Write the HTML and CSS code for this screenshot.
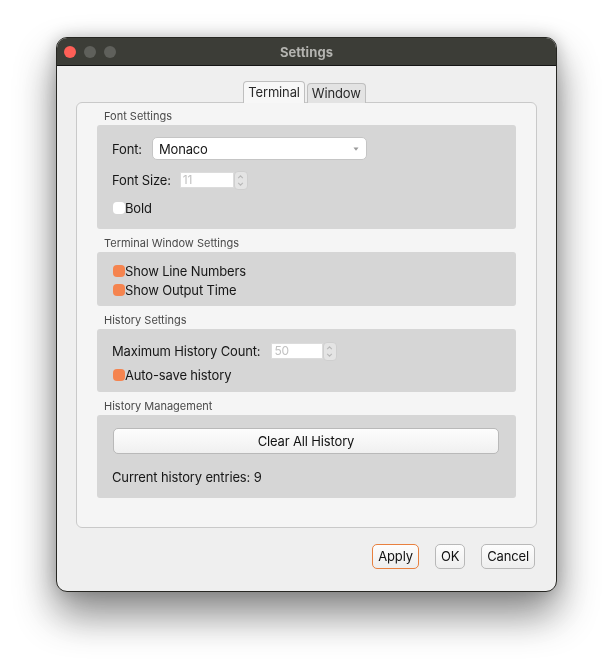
FILE: index.html
```html
<!DOCTYPE html>
<html>
<head>
<meta charset="utf-8">
<title>Settings</title>
<link rel="stylesheet" href="styles.css">
</head>
<body>
<div class="shadow-wrap">
<div class="window">
  <div class="titlebar">
    <div class="lights">
      <span class="light red"></span>
      <span class="light grey"></span>
      <span class="light grey"></span>
    </div>
    <div class="title">Settings</div>
    <div></div>
  </div>
  <div class="content">
    <div class="tabs">
      <div class="tab active">Terminal</div>
      <div class="tab">Window</div>
    </div>
    <div class="pane">
      <section class="section">
        <div class="group-title">Font Settings</div>
        <div class="group g-font">
          <div class="row row-combo">
            <span class="label">Font:</span>
            <div class="combo"><span>Monaco</span>
              <svg class="combo-arrow" width="8" height="6" viewBox="0 0 8 6"><path d="M1.5 1.5 L6.5 1.5 L4 4.8 Z" fill="#9a9a9a"/></svg>
            </div>
          </div>
          <div class="row row-spin">
            <span class="label">Font Size:</span>
            <div class="spin">
              <div class="spin-input">11</div>
              <div class="stepper">
                <svg width="14" height="19" viewBox="0 0 14 19"><path d="M4.5 7 L7 4.5 L9.5 7" fill="none" stroke="#b8b8b8" stroke-width="1.2"/><path d="M4.5 12 L7 14.5 L9.5 12" fill="none" stroke="#b8b8b8" stroke-width="1.2"/></svg>
              </div>
            </div>
          </div>
          <div class="row row-check">
            <span class="check off"></span><span class="label">Bold</span>
          </div>
        </div>
      </section>
      <section class="section">
        <div class="group-title">Terminal Window Settings</div>
        <div class="group g-term">
          <div class="row row-check2"><span class="check on"></span><span class="label">Show Line Numbers</span></div>
          <div class="row row-check2"><span class="check on"></span><span class="label">Show Output Time</span></div>
        </div>
      </section>
      <section class="section">
        <div class="group-title">History Settings</div>
        <div class="group g-hist">
          <div class="row row-spin">
            <span class="label">Maximum History Count:</span>
            <div class="spin spin-wide">
              <div class="spin-input">50</div>
              <div class="stepper">
                <svg width="14" height="19" viewBox="0 0 14 19"><path d="M4.5 7 L7 4.5 L9.5 7" fill="none" stroke="#b8b8b8" stroke-width="1.2"/><path d="M4.5 12 L7 14.5 L9.5 12" fill="none" stroke="#b8b8b8" stroke-width="1.2"/></svg>
              </div>
            </div>
          </div>
          <div class="row row-check"><span class="check on"></span><span class="label">Auto-save history</span></div>
        </div>
      </section>
      <section class="section">
        <div class="group-title">History Management</div>
        <div class="group g-mgmt">
          <div class="wide-btn">Clear All History</div>
          <div class="row row-text"><span class="label">Current history entries: 9</span></div>
        </div>
      </section>
    </div>
    <div class="buttons">
      <div class="btn default">Apply</div>
      <div class="btn">OK</div>
      <div class="btn">Cancel</div>
    </div>
  </div>
</div>
</div>
</body>
</html>
```

FILE: styles.css
```css
* { box-sizing: border-box; }
html, body { margin: 0; padding: 0; background: #ffffff; }
body {
  font-family: Inter, "Liberation Sans", sans-serif;
  font-size: 13px;
  letter-spacing: -0.15px;
  color: #161616;
  padding: 37px 0 0 56px;
  min-height: 665px;
}
.shadow-wrap {
  width: 501px;
  filter: drop-shadow(0 22px 20px rgba(0,0,0,0.42)) drop-shadow(0 0 8px rgba(0,0,0,0.22));
}
.window {
  width: 501px;
  border: 1px solid #262622;
  border-radius: 11px;
  overflow: hidden;
  background: #efefef;
}
.titlebar {
  height: 28px;
  background: #3c3d37;
  border-bottom: 1px solid #151515;
  display: grid;
  grid-template-columns: 1fr auto 1fr;
  align-items: center;
}
.lights { display: flex; gap: 8px; padding-left: 7px; }
.light { width: 12px; height: 12px; border-radius: 50%; display: block; }
.light.red { background: #fe5f57; }
.light.grey { background: #5f605b; }
.title {
  font-weight: 700;
  font-size: 13px;
  color: #b4b4b0;
  letter-spacing: 0.1px;
}
.content { padding: 15px 19px 22px; }
.tabs {
  display: flex;
  justify-content: center;
  align-items: flex-end;
  gap: 2px;
  height: 22px;
  position: relative;
  z-index: 2;
  padding-right: 4px;
}
.tab {
  height: 20px;
  padding: 0 4px;
  border: 1px solid #bfbfbf;
  border-bottom: none;
  border-radius: 4px 4px 0 0;
  background: #e3e3e3;
  line-height: 19px;
  font-size: 13px;
  color: #2a2a2a;
}
.tab.active {
  height: 22px;
  background: #f7f7f7;
  line-height: 21px;
}
.pane {
  margin-top: -1px;
  border: 1px solid #c9c9c9;
  border-radius: 6px;
  background: #f5f5f5;
  padding: 6px 20px 29px;
}
.section + .section { margin-top: 7px; }
.group-title {
  font-size: 11px;
  line-height: 14px;
  color: #4a4a4a;
  padding-left: 7px;
  margin-bottom: 2px;
  letter-spacing: 0;
}
.group {
  background: #d6d6d6;
  border-radius: 3px;
  padding: 12px 17px 12px 15px;
}
.row { display: flex; align-items: center; }
.label { white-space: nowrap; }
.row-combo { height: 23px; gap: 10px; }
.row-spin { height: 18px; gap: 9px; margin-top: 11px; }
.row-check { height: 18px; margin-top: 10px; }
.combo {
  width: 215px;
  height: 23px;
  background: #ffffff;
  border: 1px solid #c5c5c5;
  border-radius: 5px;
  display: flex;
  align-items: center;
  justify-content: space-between;
  padding: 0 6px 0 6px;
  font-size: 13px;
}
.combo-arrow { margin-top: 1px; }
.spin { display: flex; align-items: center; }
.spin-input {
  width: 54px;
  height: 16px;
  background: #ffffff;
  border: 1px solid #dcdcdc;
  color: #c2c2c2;
  font-size: 12px;
  line-height: 14px;
  padding-left: 2px;
}
.stepper {
  width: 14px;
  height: 19px;
  background: #e4e4e4;
  border: 1px solid #cfcfcf;
  border-radius: 4px;
  display: flex;
}
.stepper svg { margin: -1px 0 0 -1px; }
.check {
  width: 12px;
  height: 12px;
  border-radius: 4px;
  display: block;
  margin-left: 1px;
  flex: none;
}
.check.off { background: #ffffff; }
.check.on { background: #f5844f; }
.g-term { padding-top: 9px; padding-bottom: 7px; }
.row-check2 { height: 19px; }
.g-hist { padding-top: 13px; padding-bottom: 8px; }
.g-hist .row-spin { margin-top: 0; gap: 11px; }
.g-hist .row-check { margin-top: 6px; }
.spin-wide .spin-input { width: 52px; }
.g-mgmt { padding-top: 13px; padding-bottom: 13px; }
.wide-btn {
  margin-left: 1px;
  height: 26px;
  border: 1px solid #b9b9b9;
  border-radius: 5px;
  background: linear-gradient(#fdfdfd, #f0f0f0);
  text-align: center;
  line-height: 24px;
  font-size: 13px;
  color: #111;
}
.row-text { height: 16px; margin-top: 15px; }
.buttons {
  display: flex;
  justify-content: flex-end;
  gap: 16px;
  margin-top: 16px;
  padding-right: 2px;
}
.btn {
  height: 25px;
  padding: 0 5px;
  border: 1px solid #b8b8b8;
  border-radius: 5px;
  background: linear-gradient(#fdfdfd, #eeeeee);
  line-height: 23px;
  font-size: 13px;
  color: #111;
}
.btn.default { border-color: #e8803f; }
```
